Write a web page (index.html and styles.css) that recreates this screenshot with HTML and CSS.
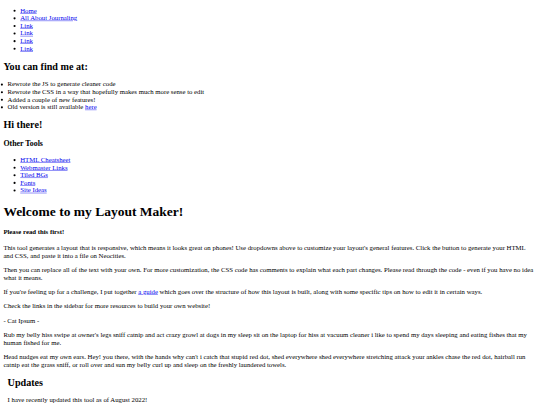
FILE: index.html
```html
<!DOCTYPE html>
<html lang="en">
<head>
<meta charset="utf-8">
<title>Layout Maker</title>
<link rel="stylesheet" href="styles.css">
</head>
<body>
<div class="page">
<ul class="nav">
  <li><a href="#">Home</a></li>
  <li><a href="#">All About Journaling</a></li>
  <li><a href="#">Link</a></li>
  <li><a href="#">Link</a></li>
  <li><a href="#">Link</a></li>
  <li><a href="#">Link</a></li>
</ul>
<h2>You can find me at:</h2>
<ul class="changes">
  <li>Rewrote the JS to generate cleaner code</li>
  <li>Rewrote the CSS in a way that hopefully makes much more sense to edit</li>
  <li>Added a couple of new features!</li>
  <li>Old version is still available <a href="#">here</a></li>
</ul>
<h2>Hi there!</h2>
<h3>Other Tools</h3>
<ul class="tools">
  <li><a href="#">HTML Cheatsheet</a></li>
  <li><a href="#">Webmaster Links</a></li>
  <li><a href="#">Tiled BGs</a></li>
  <li><a href="#">Fonts</a></li>
  <li><a href="#">Site Ideas</a></li>
</ul>
<h1>Welcome to my Layout Maker!</h1>
<h4>Please read this first!</h4>
<p>This tool generates a layout that is responsive, which means it looks great on phones! Use dropdowns above to customize your layout's general features. Click the button to generate your HTML and CSS, and paste it into a file on Neocities.</p>
<p>Then you can replace all of the text with your own. For more customization, the CSS code has comments to explain what each part changes. Please read through the code - even if you have no idea what it means.</p>
<p>If you're feeling up for a challenge, I put together <a href="#">a guide</a> which goes over the structure of how this layout is built, along with some specific tips on how to edit it in certain ways.</p>
<p>Check the links in the sidebar for more resources to build your own website!</p>
<p>- Cat Ipsum -</p>
<p>Rub my belly hiss swipe at owner's legs sniff catnip and act crazy growl at dogs in my sleep sit on the laptop for hiss at vacuum cleaner i like to spend my days sleeping and eating fishes that my human fished for me.</p>
<p>Head nudges eat my own ears. Hey! you there, with the hands why can't i catch that stupid red dot, shed everywhere shed everywhere stretching attack your ankles chase the red dot, hairball run catnip eat the grass sniff, or roll over and sun my belly curl up and sleep on the freshly laundered towels.</p>
<div class="updates">
  <h2>Updates</h2>
  <p>I have recently updated this tool as of August 2022!</p>
</div>
</div>
</body>
</html>
```
FILE: styles.css
```css
html,
body {
  margin: 0;
  overflow: hidden;
}
.page {
  box-sizing: border-box;
  width: 1280px;
  padding: 8px;
  transform: scale(0.421875);
  transform-origin: 0 0;
  font-family: "Liberation Serif", "Times New Roman", serif;
  color: #000;
  background: #fff;
}
a {
  color: #0000ee;
}
.nav {
  margin-top: 8px;
}
.changes {
  padding-left: 10px;
}
.updates {
  padding: 0 10px;
}
```
